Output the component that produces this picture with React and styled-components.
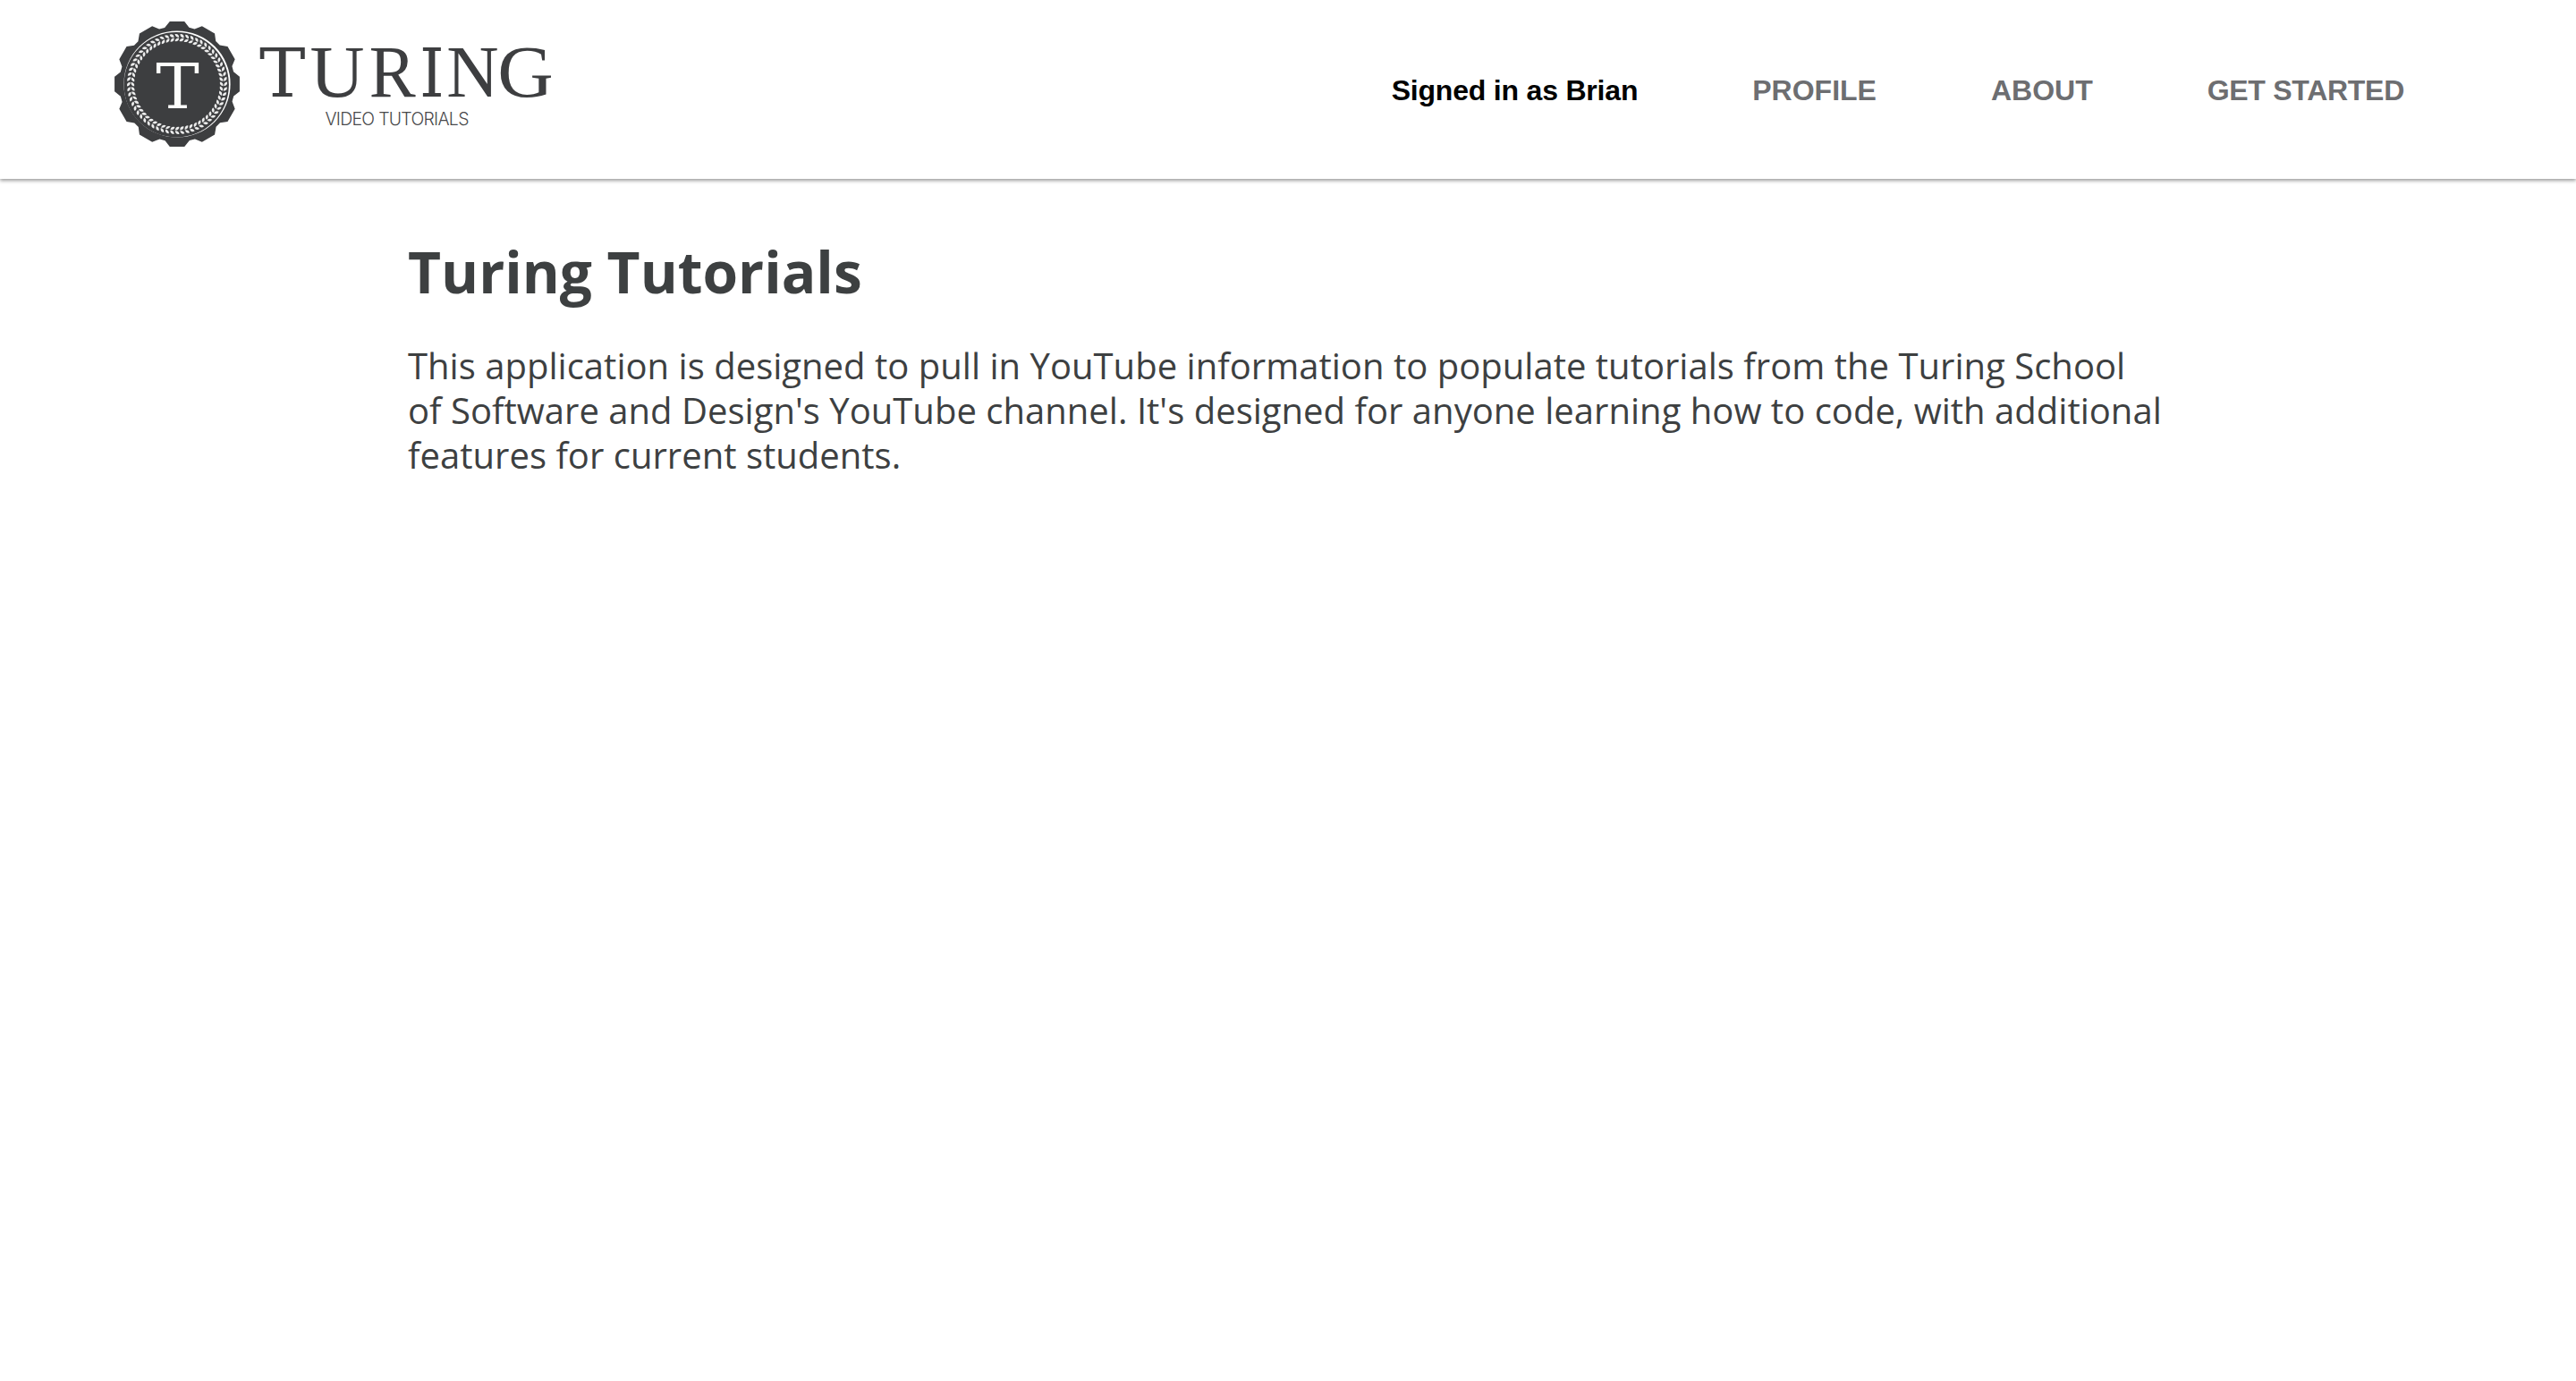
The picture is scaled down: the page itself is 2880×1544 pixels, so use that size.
import React from "react";
import styled, { createGlobalStyle } from "styled-components";

const GlobalStyle = createGlobalStyle`
  * { box-sizing: border-box; }
  body { margin: 0; background: #fff; }
`;

const Header = styled.header`
  display: flex;
  justify-content: space-between;
  align-items: flex-start;
  height: 200px;
  padding: 20px 192px 0 124px;
  background: #fff;
  box-shadow: 0 2px 4px rgba(0, 0, 0, 0.4);
`;

const LogoLink = styled.a`
  display: block;
  line-height: 0;
`;

const Nav = styled.nav`
  display: flex;
  gap: 128px;
  padding-top: 63px;
  font: 700 32px/37px "Liberation Sans", Arial, sans-serif;
`;

const NavItem = styled.a`
  color: ${(p) => (p.$current ? "#000" : "#6d6e71")};
  letter-spacing: ${(p) => p.$tracking || 0}px;
  text-decoration: none;
  white-space: nowrap;
`;

const Main = styled.main`
  padding: 60px 456px 0;
  color: #3d4041;
  font-family: "Open Sans", sans-serif;
`;

const Title = styled.h1`
  margin: 0;
  font-size: 64px;
  line-height: 88px;
  font-weight: 700;
`;

const Intro = styled.p`
  max-width: 1964px;
  margin: 36px 0 0;
  font-size: 40px;
  line-height: 50px;
  letter-spacing: 0.02px;
`;

const INK = "#3d3e40";
const SLAB = "DejaVu Serif, serif";
const ROMAN = "Liberation Serif, serif";

const WORDMARK = [
  { char: "T", x: 289.9, stretch: 1.03, font: SLAB, size: 75 },
  { char: "U", x: 346.6, stretch: 1.03, font: ROMAN, size: 82 },
  { char: "R", x: 412.8, stretch: 0.95, font: ROMAN, size: 82 },
  { char: "I", x: 469, stretch: 0.95, font: SLAB, size: 74 },
  { char: "N", x: 499.2, stretch: 0.985, font: ROMAN, size: 82 },
  { char: "G", x: 556.3, stretch: 1.055, font: ROMAN, size: 82 },
];

function scallop() {
  const pts = [];
  for (let i = 0; i < 12; i++) {
    [[-6.7, 70.4], [6.7, 70.4], [12, 64.6], [17.6, 64.6]].forEach(([a, r]) => {
      const t = ((i * 30 + a - 90) * Math.PI) / 180;
      pts.push(`${(r * Math.cos(t)).toFixed(2)},${(r * Math.sin(t)).toFixed(2)}`);
    });
  }
  return pts.join(" ");
}

function Logo() {
  return (
    <svg width="500" height="148" viewBox="124 20 500 148" role="img">
      <g transform="translate(198 94)">
        <polygon points={scallop()} fill={INK} />
        <circle r="59.6" fill="#fff" />
        <circle cx="-0.8" cy="0.8" r="58.7" fill={INK} />
        {Array.from({ length: 60 }, (_, i) => (
          <g key={i} transform={`rotate(${i * 6})`} fill="#ececec">
            <path d="M-2.5 -55.9 Q1.8 -56.8 2.2 -52.3 Q-1.8 -52 -2.5 -55.9Z" />
            <path d="M-2.5 -47.9 Q1.8 -47.2 2.2 -51.6 Q-1.8 -51.9 -2.5 -47.9Z" />
          </g>
        ))}
        <text
          transform="translate(0.5 0) scale(1.04 1)"
          y="27"
          textAnchor="middle"
          fill="#fdfdfb"
          fontFamily={SLAB}
          fontSize="70"
        >
          T
        </text>
      </g>
      {WORDMARK.map(({ char, x, stretch, font, size }) => (
        <text
          key={char}
          transform={`translate(${x} 107.6) scale(${stretch} 1)`}
          fill={INK}
          fontFamily={font}
          fontSize={size}
        >
          {char}
        </text>
      ))}
      <text x="363.4" y="139.5" textLength="161" fill="#48494b" fontFamily="Inter, sans-serif" fontWeight="300" fontSize="19.4">
        VIDEO TUTORIALS
      </text>
    </svg>
  );
}

export default function App() {
  return (
    <>
      <GlobalStyle />
      <Header>
        <LogoLink><Logo /></LogoLink>
        <Nav>
          <NavItem $current $tracking={-0.2}>Signed in as Brian</NavItem>
          <NavItem>PROFILE</NavItem>
          <NavItem>ABOUT</NavItem>
          <NavItem $tracking={-0.28}>GET STARTED</NavItem>
        </Nav>
      </Header>
      <Main>
        <Title>Turing Tutorials</Title>
        <Intro>
          This application is designed to pull in YouTube information to populate tutorials from the Turing School of Software and Design's YouTube channel. It's designed for anyone learning how to code, with additional features for current students.
        </Intro>
      </Main>
    </>
  );
}
